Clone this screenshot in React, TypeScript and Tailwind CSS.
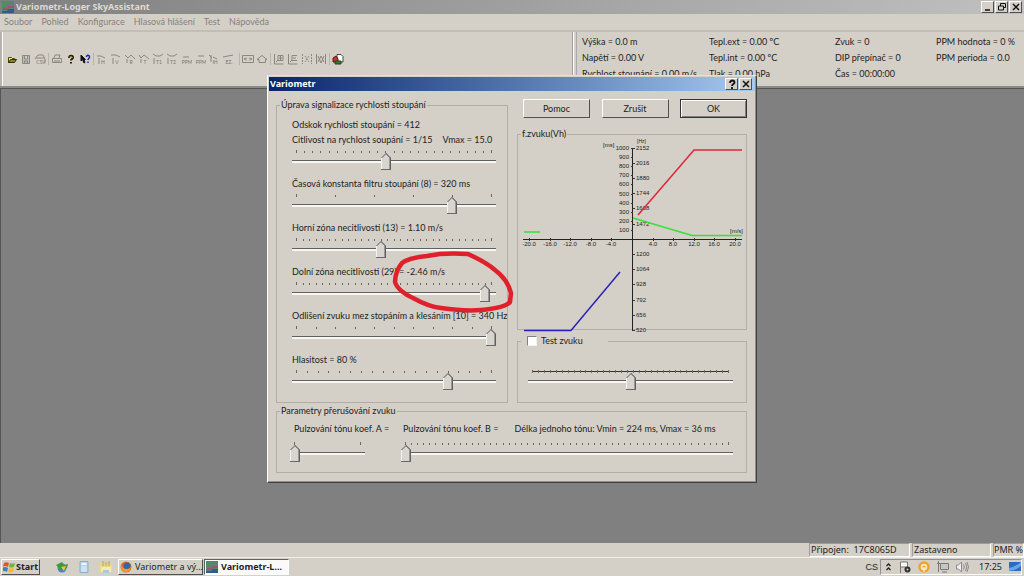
import { useState, type ReactNode } from "react";

const RAISED = "border border-t-white border-l-white border-r-[#505050] border-b-[#505050] bg-[#d4d0c8]";

// classic pointed trackbar thumb on an etched channel
const TRACKBAR = [
  "m-0 block h-[17px] w-full cursor-default appearance-none bg-transparent",
  "[&::-webkit-slider-runnable-track]:h-[3px]",
  "[&::-webkit-slider-runnable-track]:border-t",
  "[&::-webkit-slider-runnable-track]:border-[#606060]",
  "[&::-webkit-slider-runnable-track]:bg-[#f8f7f4]",
  "[&::-webkit-slider-thumb]:-mt-2",
  "[&::-webkit-slider-thumb]:h-[17px]",
  "[&::-webkit-slider-thumb]:w-[10px]",
  "[&::-webkit-slider-thumb]:appearance-none",
  "[&::-webkit-slider-thumb]:[background:linear-gradient(135deg,transparent_46%,#959595_46%_64%,#d8d5ce_64%)_0_0/5px_5px_no-repeat,linear-gradient(225deg,transparent_46%,#808080_46%_64%,#d8d5ce_64%)_5px_0/5px_5px_no-repeat,linear-gradient(#686868,#686868)_0_16px/10px_1px_no-repeat,linear-gradient(90deg,#f4f2ee_1px,#d8d5ce_1px_8px,#989898_8px_9px,#606060_9px)_0_5px/10px_12px_no-repeat]",
].join(" ");

function Ticks({ count, line = false }: { count: number; line?: boolean }) {
  return (
    <div className={`mx-1 flex h-[3px] items-center justify-between ${line ? "bg-[linear-gradient(#333,#333)] bg-[length:100%_1px] bg-center bg-no-repeat" : ""}`}>
      {Array.from({ length: count }, (_, i) => (
        <span key={i} className={`w-px bg-[#666] ${i === 0 || i === count - 1 || line ? "h-[3px]" : "h-[2px]"}`} />
      ))}
    </div>
  );
}

interface TrackProps {
  id: string;
  label: ReactNode;
  max: number;
  initial: number;
  ticks: number;
  loose?: boolean;
}

function Track({ id, label, max, initial, ticks, loose = false }: TrackProps) {
  const [value, setValue] = useState(initial);
  return (
    <div>
      <label htmlFor={id} className="block h-3 whitespace-nowrap leading-3">{label}</label>
      <div className={loose ? "mt-[7px]" : "mt-1"}>
        <Ticks count={ticks} />
        <input id={id} type="range" min={0} max={max} value={value} onChange={(e) => setValue(Number(e.target.value))} className={TRACKBAR} />
      </div>
    </div>
  );
}

function Group({ title, className, children }: { title: ReactNode; className: string; children: ReactNode }) {
  return (
    <fieldset className={`min-w-0 border border-[#b2aea6] ${className}`}>
      <legend className="ml-[3px] px-px leading-3">{title}</legend>
      {children}
    </fieldset>
  );
}

const X0 = 110;
const Y0 = 99;

function SoundChart() {
  const xs = [-20, -16, -12, -8, -4, 4, 8, 12, 16, 20];
  const upper = [2152, 2016, 1880, 1744, 1608, 1472];
  const lower = [1200, 1064, 928, 792, 656, 520];
  return (
    <svg viewBox="0 0 224 193" className="ml-1 block h-[193px] w-[224px] overflow-visible font-['Liberation_Sans',sans-serif] text-[6px]" fill="#222" role="img" aria-label="f.zvuku(Vh)">
      <path d={`M1 ${Y0 + 0.5}H220M${X0 + 0.5} 8V190`} stroke="#222" fill="none" />
      {xs.map((v) => {
        const x = Math.round(X0 + v * 5.15);
        return (
          <g key={v}>
            <path d={`M${x + 0.5} ${Y0 - 1}v3`} stroke="#333" />
            <text x={x} y={Y0 + 7} textAnchor="middle">{v.toFixed(1)}</text>
          </g>
        );
      })}
      {Array.from({ length: 10 }, (_, i) => (i + 1) * 100).map((v) => {
        const y = Math.round(Y0 - v * 0.091);
        return (
          <g key={v}>
            <path d={`M${X0 - 1} ${y + 0.5}h2`} stroke="#333" />
            <text x={X0 - 3} y={y + 2} textAnchor="end">{v}</text>
          </g>
        );
      })}
      {upper.map((v, i) => (
        <g key={v}>
          <path d={`M${X0} ${Math.round(8 + i * 15.1) + 0.5}h3`} stroke="#333" />
          <text x={X0 + 4} y={Math.round(8 + i * 15.1) + 2}>{v}</text>
        </g>
      ))}
      {lower.map((v, i) => (
        <g key={v}>
          <path d={`M${X0} ${Math.round(114 + i * 15.2) + 0.5}h3`} stroke="#333" />
          <text x={X0 + 4} y={Math.round(114 + i * 15.2) + 2}>{v}</text>
        </g>
      ))}
      <text x="81" y="7">[ms]</text>
      <text x="115" y="3" fontSize="5">[Hz]</text>
      <text x="208" y="93">[m/s]</text>
      <g fill="none" strokeWidth="1.5">
        <path d="M116 75L172 10H220" stroke="#e0263a" />
        <path d="M2 92H18M111 78L170 95.500H220" stroke="#35e03a" />
        <path d="M2 190.500H49L98 132" stroke="#2a22b8" />
      </g>
    </svg>
  );
}

function ToolIcon({ name, label, children }: { name?: string; label: string; children?: ReactNode }) {
  return (
    <button type="button" aria-label={label} className="flex h-4 w-[14px] shrink-0 items-center justify-center">
      <svg viewBox="0 0 12 12" className="size-3" fill="none" stroke="#8a877f" strokeWidth="1">
        {children}
        {name && <text x="7" y="11" textAnchor="middle" fontSize="5" fill="#77746e" stroke="none">{name}</text>}
      </svg>
    </button>
  );
}

function Sep() {
  return <span className="mx-px h-3 w-px shrink-0 bg-[#b8b4ac]" />;
}

function Toolbar() {
  const graphs = [
    { name: "H", d: "M1 3h4l4 2M3 5v6" },
    { name: "V", d: "M1 2h5l4 2M3 5v6" },
    { name: "R", d: "M1 2l3 3 3-3 4 4M3 6v4" },
    { name: "T", d: "M1 2l2 3 3-3 5 4M3 6v4" },
    { name: "T1", d: "M1 1l3 2h4l3-2M2 5v6" },
    { name: "T2", d: "M1 1l3 2h4l3-2M2 5v6" },
    { name: "PPM", d: "M3 4h6" },
    { name: "PPM", d: "M4 3h6" },
    { name: "IH", d: "M1 2l3 3M3 2v7M5 4l4 2" },
    { name: "EZ.", d: "M1 4l5-1 5-1" },
  ];
  return (
    <div className="ml-[3px] flex items-center">
      <ToolIcon label="Otevřít">
        <path d="M2.500 10V4.500h3l1 1h2V7" stroke="#4a4510" fill="#f0e890" />
        <path d="M2.500 9.500l2-3h6l-2 3z" stroke="#333008" fill="#8c8425" />
      </ToolIcon>
      <ToolIcon label="Uložit">
        <path d="M2.500 2.500h7v8h-7zM4.500 3v3h3V3M4.500 10V8h3v2" fill="#bbb" />
      </ToolIcon>
      <ToolIcon label="Uložit CSV" name="CSV"><path d="M1 6l3-4h5l2 4v4M2 5h8" /></ToolIcon>
      <Sep />
      <ToolIcon label="Tisk">
        <path d="M3 5l1-3h5L8 5M1.500 5.500h9v4h-9zM3 8h6" />
      </ToolIcon>
      <ToolIcon label="O aplikaci">
        <path d="M4 5c0-3 4-3 4-.5C8 6 6 6 6 7.500M6 9v1.500" stroke="#222000" strokeWidth="2" />
        <path d="M4 4.500c.5-1.500 3.500-1 3.500.5" stroke="#b5a92a" strokeWidth=".8" />
      </ToolIcon>
      <ToolIcon label="Kontextová nápověda">
        <path d="M2 2v6l1.500-1.500L5 10l1-.5-1-3h1.500z" fill="#111" stroke="#111" />
        <path d="M7.500 4c0-2.500 3-2 3 0 0 1.500-1.500 1.500-1.500 3M9 8.500V10" stroke="#1c2492" strokeWidth="1.500" />
      </ToolIcon>
      <Sep />
      {graphs.map((g, i) => (
        <ToolIcon key={i} label={`Graf ${i + 1}`} name={g.name}><path d={g.d} /></ToolIcon>
      ))}
      <span className="ml-[3px] flex items-center">
        <Sep />
        <ToolIcon label="Šířka"><path d="M.5 2.500h11v7H.5zM2 6h3M7 6h3M4 4.500L2.500 6 4 7.500M8 4.500L9.500 6 8 7.500" /></ToolIcon>
        <ToolIcon label="Celý graf"><path d="M3 9.500v-3H1l5-4 5 4H9.500v3z" /></ToolIcon>
        <Sep />
        <ToolIcon label="Zvětšit"><path d="M1.500 1v10h9M3 9l2-2M5 2.500h5v5H5zM7.500 3v4M6 5h3" /></ToolIcon>
        <ToolIcon label="Zmenšit"><path d="M1.500 1v10h9M3 9l2-2M10 2.500H5v5h5M6 5h3" /></ToolIcon>
        <ToolIcon label="Výběr"><path d="M1.500 1v10M10.500 1v10M4 3l4 6M8 3L4 9" strokeDasharray="2 1" /></ToolIcon>
        <ToolIcon label="Oblast"><path d="M1.500 1v10M10.500 1v10M3 3l3 7 3-7M3 9l3-6 3 6" /></ToolIcon>
        <Sep />
        <ToolIcon label="Konec">
          <path d="M5 1.500h4l2 2V9H5z" fill="#fff" stroke="#444" />
          <path d="M1 9V5l3-2 2 3v3z" fill="#c8352c" stroke="#5b1712" />
          <path d="M3 8h6v3H3z" fill="#3b7a34" stroke="#24451f" />
        </ToolIcon>
      </span>
    </div>
  );
}

function InfoPanel() {
  const columns = [
    ["Výška = 0.0 m", "Napětí = 0.00 V", "Rychlost stoupání = 0.00 m/s"],
    ["Tepl.ext = 0.00 ºC", "Tepl.int = 0.00 ºC", "Tlak = 0.00 hPa"],
    ["Zvuk = 0", "DIP přepínač = 0", "Čas = 00:00:00"],
    ["PPM hodnota = 0 %", "PPM perioda = 0.0"],
  ];
  return (
    <div className="grid w-[452px] shrink-0 grid-cols-[127px_126px_101px_1fr] border-l border-[#a09c94] pl-[9px] pt-1 shadow-[inset_1px_0_#fff,inset_3px_0_#d4d0c8,inset_4px_0_#aaa]">
      {columns.map((rows) => (
        <div key={rows[0]} className="flex flex-col gap-1 whitespace-nowrap leading-3">
          {rows.map((r) => <p key={r}>{r}</p>)}
        </div>
      ))}
    </div>
  );
}

function CaptionButton({ label, children }: { label: string; children: ReactNode }) {
  return (
    <button type="button" aria-label={label} className={`flex h-3 w-[13px] items-center justify-center ${RAISED}`}>
      <svg viewBox="0 0 10 10" className="size-[10px]" fill="none" stroke="#111" strokeWidth="1.500">{children}</svg>
    </button>
  );
}

const CROSS = <path d="M2 2l6 6M8 2L2 8" />;

function VariometrDialog() {
  const [test, setTest] = useState(false);
  const [tone, setTone] = useState(50);
  const button = "h-[19px] w-[67px] text-center";
  return (
    <div role="dialog" aria-label="Variometr" className="absolute inset-x-0 top-[75px] mx-auto w-[490px] border border-t-[#e4e1da] border-l-white border-r-[#404040] border-b-[#404040] bg-[#d4d0c8] p-px shadow-[inset_-1px_-1px_#909090]">
      <div className="flex h-[14px] items-center justify-between bg-linear-to-r from-[#0a246a] to-[#a6caf0] pl-px pr-[3px]">
        <h2 className="font-['Noto_Sans',sans-serif] font-bold text-white">Variometr</h2>
        <div className="flex gap-px">
          <CaptionButton label="Nápověda"><path d="M3 4c0-3.500 4.500-3 4.500-.5C7.500 5 5 5 5 7M5 8v2" strokeWidth="1.800" /></CaptionButton>
          <CaptionButton label="Zavřít">{CROSS}</CaptionButton>
        </div>
      </div>

      <div className="pb-2 pl-[7px] pr-2 pt-2">
        <div className="flex justify-between">
          <Group title="Úprava signalizace rychlosti stoupání" className="w-[232px] pb-3">
            <div className="pl-[15px] pr-[11px] pt-2">
              <p className="mb-[3px] leading-3">Odskok rychlosti stoupání = 412</p>
              <div className="flex flex-col gap-2">
                <Track id="citlivost" label={<>Citlivost na rychlost soupání = 1/15<span className="ml-[10px]">Vmax = 15.0</span></>} max={24} initial={11} ticks={25} />
                <Track id="konstanta" label="Časová konstanta filtru stoupání (8) = 320 ms" max={5} initial={4} ticks={6} />
                <Track id="horni" label="Horní zóna necitlivosti (13) = 1.10 m/s" max={30} initial={13} ticks={31} />
                <Track id="dolni" label="Dolní zóna necitlivosti (29) = -2.46 m/s" max={30} initial={29} ticks={31} />
                <Track id="odliseni" label="Odlišení zvuku mez stopáním a klesáním [10] = 340 Hz" max={10} initial={10} ticks={11} />
                <Track id="hlasitost" label="Hlasitost = 80 %" max={18} initial={14} ticks={19} />
              </div>
            </div>
          </Group>

          <div className="flex w-[230px] flex-col">
            <div className="flex justify-between pl-[6px]">
              <button type="button" className={`${button} ${RAISED}`}>Pomoc</button>
              <button type="button" className={`${button} ${RAISED}`}>Zrušit</button>
              <button type="button" className={`${button} border border-[#333] bg-[#d4d0c8] shadow-[inset_1px_1px_#fff,inset_-1px_-1px_#808080]`}>OK</button>
            </div>
            <Group title="f.zvuku(Vh)" className="mt-[10px] h-[202px]">
              <SoundChart />
            </Group>
            <Group
              title={
                <span className="flex w-[85px] items-center gap-1 pl-[5px]">
                  <input id="test" type="checkbox" checked={test} onChange={(e) => setTest(e.target.checked)} className="size-[10px] appearance-none border border-[#808080] border-r-[#f4f2ee] border-b-[#f4f2ee] bg-white checked:bg-[#404040]" />
                  <label htmlFor="test">Test zvuku</label>
                </span>
              }
              className="mt-[5px] flex-1"
            >
              <div className="pl-[10px] pr-[13px] pt-[23px]">
                <Ticks count={34} line />
                <input type="range" aria-label="Test zvuku" min={0} max={100} value={tone} onChange={(e) => setTone(Number(e.target.value))} className={TRACKBAR} />
              </div>
            </Group>
          </div>
        </div>

        <Group title="Parametry přerušování zvuku" className="mt-[2px] pb-[10px]">
          <div className="flex gap-9 pl-[13px] pr-[13px] pt-[6px]">
            <div className="w-[75px]">
              <Track id="koef-a" label={<span className="ml-1">Pulzování tónu koef. A =</span>} max={1} initial={0} ticks={2} loose />
            </div>
            <div className="flex-1">
              <Track id="koef-b" label={<span className="ml-[2px]">Pulzování tónu koef. B =<span className="ml-4">Délka jednoho tónu: Vmin = 224 ms, Vmax = 36 ms</span></span>} max={53} initial={0} ticks={54} loose />
            </div>
          </div>
        </Group>
      </div>

      {/* hand-drawn marker around the lower dead zone value */}
      <svg viewBox="0 0 124 64" className="pointer-events-none absolute left-[123px] top-[174px] h-16 w-[124px]" fill="none" stroke="#e0202a" strokeWidth="4.500" strokeLinecap="round" strokeLinejoin="round">
        <path d="M76 4C61 3 46 4 36 6C25 7 16 9 11 13C7 18 4 24 4 32C6 39 15 45 22 48C31 53 40 57 50 58C64 60 78 61 90 60C103 59 115 57 119 52L120 43C118 35 112 26 104 20C96 13 88 9 77 4" />
      </svg>
    </div>
  );
}

function AppIcon({ className }: { className: string }) {
  return (
    <svg viewBox="0 0 12 12" className={className}>
      <path d="M0 0h12v12H0z" fill="#5d7f7d" />
      <path d="M0 3l5-3h3L0 7z" fill="#3f9c4c" />
      <path d="M1 7h5V5h6v2H7v2H1z" fill="#a0565c" />
      <path d="M0 10h5l2-2h5v4H0z" fill="#2c5f8e" />
    </svg>
  );
}

function Taskbar() {
  return (
    <footer className="flex h-[19px] items-center border-t border-[#f0eee9] bg-[#d4d0c8] pl-px font-['Noto_Sans',sans-serif]">
      <button type="button" className={`flex h-4 w-[39px] items-center gap-px pl-px font-bold ${RAISED}`}>
        <svg viewBox="0 0 12 12" className="size-3">
          <path d="M1 2q2-1.500 5 0L5 6Q3 4.500 0 5.500z" fill="#e5532d" />
          <path d="M7 2q2 1 5 0l-1 4Q8 7 6 6z" fill="#6fb53f" />
          <path d="M0 6.500Q3 5.500 5 7l-1 4Q2 9.500-.5 10.500z" fill="#3a7fd5" />
          <path d="M6 7q2 1 5 0l-1 4q-3 1-5 0z" fill="#f2bd2c" />
        </svg>
        Start
      </button>
      <div className="ml-4 flex items-center gap-[10px]">
        <button type="button" aria-label="Správce stahování">
          <svg viewBox="0 0 12 12" className="size-3">
            <circle cx="6" cy="7" r="4.500" fill="#4a86b8" />
            <path d="M0 4l6-3 2 3 4-1-1 4-6 2z" fill="#3c9a38" />
            <path d="M5 6l5-1-2 5z" fill="#e6c738" />
          </svg>
        </button>
        <button type="button" aria-label="Kalkulačka">
          <svg viewBox="0 0 12 12" className="size-3">
            <path d="M2 .5h8v11H2z" fill="#bcd3e4" stroke="#8fafc8" />
            <path d="M3.500 2h5v2h-5z" fill="#f1f7fb" />
            <path d="M3.500 6h5M3.500 8h5M3.500 10h5" stroke="#fff" strokeDasharray="1.200 .7" />
          </svg>
        </button>
        <button type="button" aria-label="Průzkumník">
          <svg viewBox="0 0 12 12" className="size-3">
            <path d="M0 2h4l1 1h7v8H0z" fill="#ecd78a" />
            <path d="M3 0v5M6 1v4M9 0v5" stroke="#b2a365" />
            <path d="M1 6h10v5H1z" fill="#f6e9b0" />
            <path d="M3 9h6v3H3z" fill="#a9cbe0" />
          </svg>
        </button>
      </div>
      <button type="button" className={`ml-[6px] flex h-4 w-[85px] items-center gap-[3px] whitespace-nowrap pl-px ${RAISED}`}>
        <svg viewBox="0 0 12 12" className="size-3 shrink-0">
          <circle cx="6" cy="6" r="5.500" fill="#e06a22" />
          <circle cx="7" cy="5" r="3.500" fill="#2f66ad" />
          <path d="M1 3q1 5 6 5 3 0 4-3-1 7-6 6-5-1-4-8z" fill="#f19a2c" />
        </svg>
        Variometr a vý...
      </button>
      <button type="button" className="ml-px flex h-4 w-[85px] items-center gap-[3px] whitespace-nowrap border border-t-[#606060] border-l-[#606060] border-r-white border-b-white bg-[#fbfaf9] pl-px font-bold">
        <AppIcon className="size-3 shrink-0" />
        Variometr-L...
      </button>

      <div className="ml-auto flex h-full items-center pr-[2px]">
        <span className="mr-[2px] font-['Liberation_Sans',sans-serif]">CS</span>
        <div className="flex h-4 items-center gap-[7px] border border-t-[#909090] border-l-[#909090] border-r-white border-b-white pl-1">
          <svg viewBox="0 0 7 10" className="h-[10px] w-[7px]" fill="none" stroke="#222" strokeWidth="1.300">
            <path d="M1.500 4l2-2 2 2M1.500 8l2-2 2 2" />
          </svg>
          <svg viewBox="0 0 12 12" className="size-3">
            <path d="M1.500 12V1h7v5h-7" fill="#f8f8f8" stroke="#777" />
            <circle cx="8.500" cy="8.500" r="3" fill="#333" />
            <circle cx="8.500" cy="8.500" r="1" fill="#ccc" />
          </svg>
          <svg viewBox="0 0 12 12" className="size-3">
            <circle cx="6" cy="6" r="4.500" fill="#f7e8c8" stroke="#efa12b" strokeWidth="2.400" />
            <circle cx="6" cy="6" r="1.500" fill="#efa12b" />
            <path d="M6 6v5" stroke="#f7e8c8" strokeWidth="1.500" />
          </svg>
          <svg viewBox="0 0 12 12" className="size-3" fill="none" stroke="#777">
            <path d="M3.500 2.500h8v6h-8zM1.500 0v11M0 2.500h3M5 11h5" />
            <path d="M5 4h5v3H5z" fill="#ccc" stroke="#bbb" />
          </svg>
          <svg viewBox="0 0 13 12" className="h-3 w-[13px]" fill="none" stroke="#8a8a8a">
            <path d="M.5 4h2l3-3v10l-3-3h-2z" fill="#eee" />
            <path d="M7.500 3.500q1.500 2.500 0 5M9.500 2q2.500 4 0 8M11 1q3 5 0 10" />
          </svg>
          <span className="ml-[3px]">17:25</span>
          <svg viewBox="0 0 12 10" className="h-[10px] w-3">
            <path d="M0 0h12v9H0z" fill="#2e6bc0" />
            <path d="M0 6q6-1 12-6v4Q6 9 0 9z" fill="#6aa5e6" />
          </svg>
        </div>
      </div>
    </footer>
  );
}

export default function App() {
  const menu = ["Soubor", "Pohled", "Konfigurace", "Hlasová hlášení", "Test", "Nápověda"];
  return (
    <div className="relative flex min-h-screen flex-col overflow-hidden bg-[#d4d0c8] font-['Lato','Noto_Sans',sans-serif] text-[9px] leading-3 text-[#222]">
      <header className="flex h-[14px] items-center justify-between bg-linear-to-r from-[#808080] to-[#c0c0c0] px-[2px]">
        <h1 className="flex items-center gap-[2px] font-['Noto_Sans',sans-serif] font-bold text-[#dedbd5]">
          <AppIcon className="size-3" />
          Variometr-Loger SkyAssistant
        </h1>
        <div className="flex gap-px">
          <CaptionButton label="Minimalizovat"><path d="M2 8h5" /></CaptionButton>
          <CaptionButton label="Obnovit"><path d="M3.500 4V1.500h5v4H7M1.500 4h5v4h-5z" strokeWidth="1" /></CaptionButton>
          <CaptionButton label="Zavřít">{CROSS}</CaptionButton>
        </div>
      </header>

      <nav className="flex h-4 items-center gap-[9px] pl-1 text-[#85827c]">
        {menu.map((m) => <button key={m} type="button">{m}</button>)}
      </nav>

      <div className="flex h-[58px] border-t-2 border-b-2 border-t-[#c2beb6] border-b-[#8c8a86]">
        <div className="flex min-w-0 flex-1 items-center border-l-2 border-[#b8b4ac] shadow-[inset_1px_0_#fff]">
          <Toolbar />
        </div>
        <InfoPanel />
      </div>

      <main className="flex-1 border-l border-t border-[#555] bg-[#808080]" />

      <div className="flex h-[14px] items-center justify-end gap-[2px] whitespace-nowrap font-['Noto_Sans',sans-serif]">
        <span className="w-[101px] border border-t-[#a09c94] border-l-[#a09c94] border-r-white border-b-white px-px">Připojen:&nbsp; 17C8065D</span>
        <span className="w-[79px] border border-t-[#a09c94] border-l-[#a09c94] border-r-white border-b-white px-px">Zastaveno</span>
        <span className="w-[31px] border border-t-[#a09c94] border-l-[#a09c94] border-r-white border-b-white">PMR %</span>
      </div>
      <Taskbar />
      <VariometrDialog />
    </div>
  );
}
